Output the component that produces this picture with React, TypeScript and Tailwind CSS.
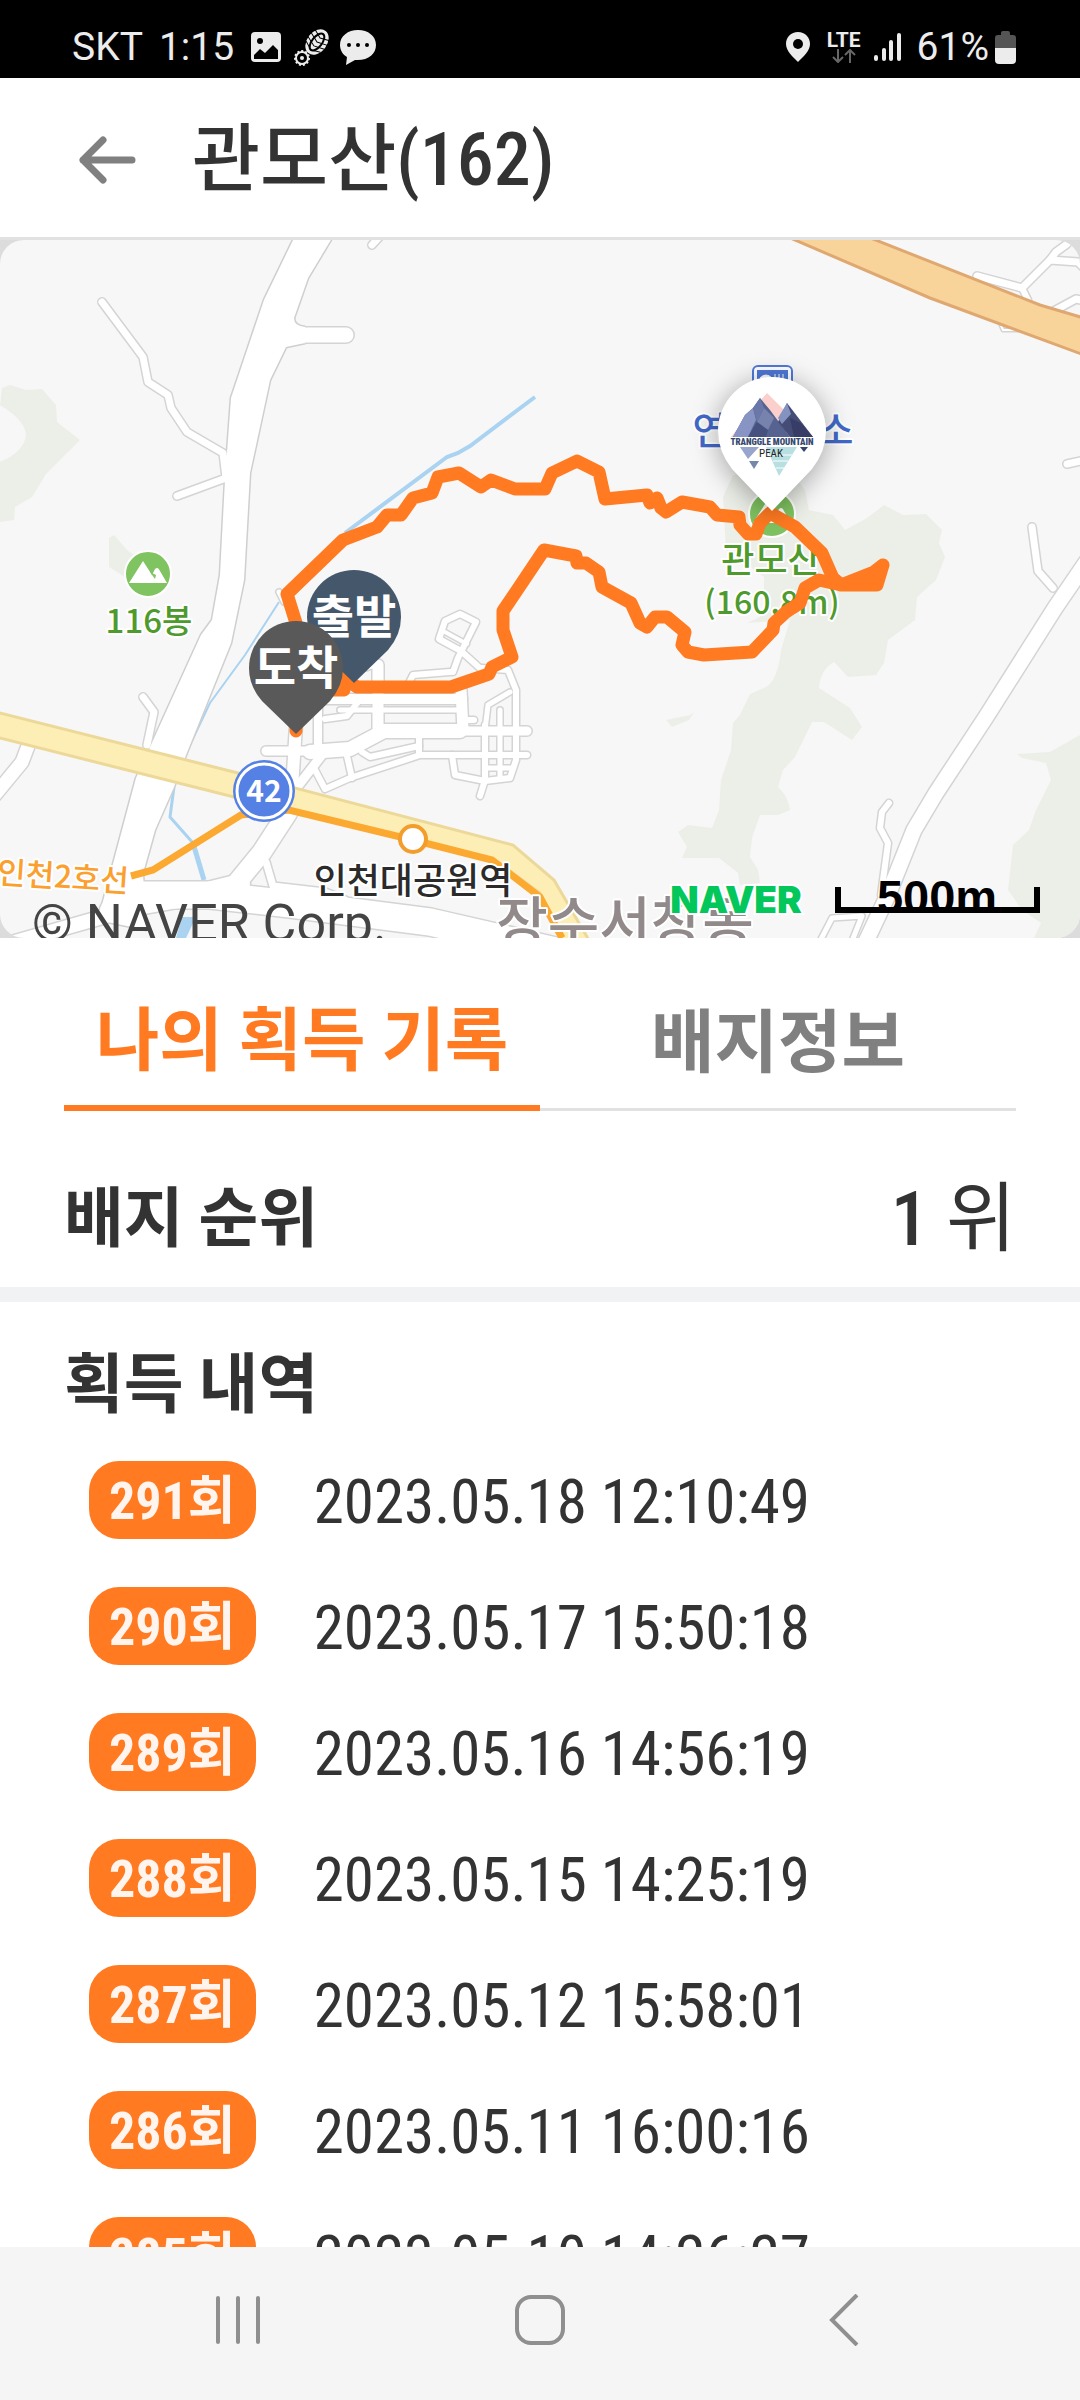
import { useState } from 'react'

interface BadgeRecord {
  count: number
  date:  string
}

const RECORDS: BadgeRecord[] = [
  { count: 291, date: '2023.05.18 12:10:49' },
  { count: 290, date: '2023.05.17 15:50:18' },
  { count: 289, date: '2023.05.16 14:56:19' },
  { count: 288, date: '2023.05.15 14:25:19' },
  { count: 287, date: '2023.05.12 15:58:01' },
  { count: 286, date: '2023.05.11 16:00:16' },
  { count: 285, date: '2023.05.10 14:26:27' },
]

const FOREST = [
  'M2 148L10 145L26 150L42 149L56 165L57 182L80 200L68 212L46 234L32 257L15 267L14 280L0 282V222Q24 212 26 195Q25 180 0 165Z',
  'M109 298L114 295L127 310L138 318L160 345L125 337L109 327Z',
  'M733 235L723 257L726 310L764 337L764 375L747 383L790 380L781 410Q778 440 766 447L750 454L740 475L733 483L731 510L721 540L719 570L712 588L688 585L678 592L687 607L682 618L719 618L738 633L740 645L760 643L758 630L750 617L752 598L760 575L778 575L790 570Q788 556 778 547L783 530L795 517L812 482L824 482L852 500L862 487L850 468L819 448Q820 430 834 422L848 437L876 435L884 423L888 400L915 380L917 357L936 340L945 317L939 303L942 290L926 274L903 275L884 265L867 278L845 290L833 275L809 270L805 250L790 230Z',
  'M1080 495L1050 512L1017 514L1022 518L1046 523L1051 540L1036 570L1029 590L1013 605L1008 650L1022 670L1041 683L1034 698H1080Z',
  'M666 480L690 475L694 472L689 480L672 487Z',
]

const STREAMS = [
  { d: 'M535 157L470 206L458 213L447 217L345 293', w: 4 },
  { d: 'M279 362L245 415L210 463L190 505L186 515', w: 2 },
  { d: 'M174 547L170 577L193 603', w: 3 },
  { d: 'M193 603L204 640', w: 5 },
]

const ROADS = [
  { d: 'M102 62L143 117L148 142L168 155L171 168L187 192L223 213L226 238L177 256', w: 7 },
  { d: 'M372 5L382 -6', w: 7 },
  { d: 'M290 95H346', w: 15 },
  { d: 'M143 457L154 472L147 505', w: 7 },
  { d: 'M-6 556L22 522L34 490', w: 13 },
  { d: 'M279 352L284 362', w: 5 },
  // housing blocks east of the pins
  { d: 'M296 485L292 548', w: 12 },
  { d: 'M266 511H345L380 491H527', w: 9 },
  { d: 'M318 455V510', w: 8 },
  { d: 'M325 479L347 476L362 457', w: 6 },
  { d: 'M310 459H462', w: 10 },
  { d: 'M340 470H462', w: 5 },
  { d: 'M310 512L350 509L384 491H460', w: 14 },
  { d: 'M378 425V488', w: 11 },
  { d: 'M378 424L366 428', w: 5 },
  { d: 'M461 450L463 490', w: 11 },
  { d: 'M463 480H474', w: 6 },
  { d: 'M298 546L325 511', w: 9 },
  { d: 'M314 528L325 549L350 538L420 515H527', w: 6 },
  { d: 'M347 516L352 538', w: 6 },
  { d: 'M362 512L370 517L419 506', w: 6 },
  { d: 'M419 495V512', w: 6 },
  { d: 'M452 515L455 535L485 541L510 538L516 520V450L508 430L482 428', w: 6 },
  { d: 'M485 485V540L480 556', w: 6 },
  { d: 'M500 470V538', w: 5 },
  { d: 'M485 528H513', w: 5 },
  { d: 'M485 490L488 465L510 452', w: 5 },
  { d: 'M482 430L461 411L439 399L445 381L460 374L476 382L458 418L453 432', w: 6 },
  { d: 'M445 392L467 404', w: 4 },
  { d: 'M408 445L413 435L450 432', w: 6 },
  // around the station
  { d: 'M288 572L262 612L235 645', w: 19 },
  { d: 'M266 622L273 646L325 652L345 660', w: 7 },
  { d: 'M120 655L210 655L290 664L430 682L560 712', w: 27 },
  { d: 'M110 670L200 654L240 644', w: 20 },
  { d: 'M-6 708L120 672', w: 14 },
  // east side
  { d: 'M1098 305L1055 368L986 477L936 553L914 590L888 655L862 710', w: 15 },
  { d: 'M1032 287L1038 331L1053 348', w: 7 },
  { d: 'M889 563L882 572L880 588L888 603L881 655', w: 6 },
  { d: 'M818 705L832 678L862 676L850 706', w: 5 },
  { d: 'M1067 224L1090 219', w: 7 },
  { d: 'M977 36L1022 48L1050 20L1078 22L1090 34', w: 7 },
  { d: 'M1050 20L1056 12L1067 4', w: 7 },
  { d: 'M1022 48L1028 60', w: 6 },
  { d: 'M1052 72L1076 59L1090 62', w: 7 },
  { d: 'M997 76L1003 90H1032', w: 2 },
]

const MAIN_ROAD =
  'M294 -2L264 60L231 158L225 240L220 335L212 380L201 395L151 505L136 538L98 680L146 690L143 633L155 590L174 547L186 515L231 403L244 340L250 233L270 140L286 107L305 103V87Q294 86 294 78L308 38L332 -2Z'

const ROUTE =
  'M296 491V383L287 354L343 300L377 287L387 275H401L413 258L432 253L438 237L459 233L481 247L491 240L515 249H545L552 233L577 221L599 232L605 259L647 255L650 263L657 258L661 268L666 272L682 262L710 267L717 275L739 277L740 285L748 294H756L760 283L770 273L795 287L822 313L833 338L841 345L874 332L883 325L877 345H841L819 340L805 348L800 363L786 372L774 383L773 390L752 412L704 415L688 412L682 405L685 392L667 377H655L647 387L640 383L631 363L602 347L599 332L586 323H577L576 316L544 310L503 371V390L512 417L492 427L489 434L451 447H357L343 437L344 450H300'

function MapText({ x, y, size, fill, children }: { x: number; y: number; size: number; fill: string; children: string }) {
  return (
    <text
      x={x}
      y={y}
      fontSize={size}
      fill={fill}
      stroke="#fff"
      strokeWidth={4}
      strokeLinejoin="round"
      textAnchor="middle"
      className="font-medium [paint-order:stroke]"
    >
      {children}
    </text>
  )
}

function PeakIcon({ cx, cy }: { cx: number; cy: number }) {
  return (
    <g transform={`translate(${cx} ${cy})`}>
      <circle r="23" fill="#80c361" stroke="#fff" strokeWidth="2" />
      <path d="M-19 9L-5 -13L4 1L7 -5Q10 -8 12 -3L19 9Z" fill="#fff" />
      <path d="M2 -2L7 5L8 1" fill="#80c361" />
    </g>
  )
}

function MountainPin() {
  return (
    <g>
      <path
        d="M772 271L732 229Q718 211 718 191A54 54 0 0 1 826 191Q826 211 812 229Z"
        fill="#fff"
        className="drop-shadow-[0_4px_14px_rgba(0,0,0,0.35)]"
      />
      <path d="M761 160L767 153L790 176L783 187Z" fill="#fbd0cc" />
      <path d="M731 197L738 188V197Z" fill="#fbd0cc" />
      <path d="M733 197L745 175L753 168L760 158L770 170L790 197Z" fill="#566290" />
      <path d="M733 197L745 175L753 168L756 180L748 197Z" fill="#8794c4" />
      <path d="M753 168L760 158L764 168L757 182Z" fill="#6a78a9" />
      <path d="M764 168L774 178L768 190L757 182Z" fill="#7783ad" />
      <path d="M757 182L768 190L766 197H748Z" fill="#465180" />
      <path d="M778 182L787 163L813 197H790Z" fill="#454d76" />
      <path d="M778 178L787 163L791 174L782 184Z" fill="#8492bf" />
      <path d="M790 178L801 183L813 197H794Z" fill="#373d66" />
      <path d="M740 207H759L748 219Z" fill="#98a5cd" />
      <path d="M749 221H759L754 229Z" fill="#7688a8" />
      <path d="M800 207H808L804 212Z" fill="#34456f" />
      <path d="M766 207H797L779 236Z" fill="#b8dfe1" />
      <path d="M770 215H792M773 221H788M776 228H784" stroke="#fff" strokeWidth="1" />
      <text x="772" y="205" fontSize="9" textAnchor="middle" fill="#36496f" className="font-['Roboto_Condensed','Roboto',sans-serif] font-black">
        TRANGGLE MOUNTAIN
      </text>
      <text x="771" y="217" fontSize="11" textAnchor="middle" fill="#222" className="font-['Roboto_Condensed','Roboto',sans-serif]">
        PEAK
      </text>
    </g>
  )
}

function LabelPin({ cx, cy, fill, label }: { cx: number; cy: number; fill: string; label: string }) {
  return (
    <g transform={`translate(${cx} ${cy})`}>
      <path d="M0 66L-34 33Q-47 18 -47 0A47 47 0 0 1 47 0Q47 18 34 33Z" fill={fill} />
      <text y="16" fontSize="46" fill="#fff" textAnchor="middle" className="font-bold">
        {label}
      </text>
    </g>
  )
}

function CourseMap() {
  return (
    <svg
      viewBox="0 0 1080 698"
      role="img"
      aria-label="관모산"
      className="block h-auto w-full rounded-3xl bg-[#f7f7f7] font-['Noto_Sans_CJK_KR',sans-serif]"
    >
      {FOREST.map(d => <path key={d} d={d} fill="#ecefe8" />)}
      {STREAMS.map(s => <path key={s.d} d={s.d} fill="none" stroke="#a9d3f0" strokeWidth={s.w} />)}

      <g fill="none" strokeLinecap="round" strokeLinejoin="round">
        <path d={MAIN_ROAD} stroke="#cfcfcf" strokeWidth="3" />
        {ROADS.map(r => <path key={r.d} d={r.d} stroke="#d4d4d4" strokeWidth={r.w + 3} />)}
        {ROADS.map(r => <path key={r.d} d={r.d} stroke="#fff" strokeWidth={r.w} />)}
      </g>
      <path d={MAIN_ROAD} fill="#fff" />
      <path d="M182 677H196L186 698H176Z" fill="#a9d3f0" />

      <path d="M-4 472L238 533L513 605L554 640L590 702H563L540 653L499 623L238 558L-4 497Z" fill="#fceeb5" stroke="#ecd99a" strokeWidth="3" />
      <path d="M788 -3L930 58L1084 115V78L1040 65L868 -3Z" fill="#f8d49a" stroke="#e0a871" strokeWidth="3" />
      <path d="M131 636L153 630L241 575L289 570L413 600L492 620L540 657L562 698" fill="none" stroke="#fba930" strokeWidth="7" />
      <circle cx="413" cy="599" r="13" fill="#fff" stroke="#f29d2c" strokeWidth="4" />

      <circle cx="264" cy="551" r="31" fill="#5580e4" />
      <circle cx="264" cy="551" r="27" fill="none" stroke="#fff" strokeWidth="3" />
      <text x="264" y="562" fontSize="30" fill="#fff" textAnchor="middle" className="font-bold">42</text>

      <PeakIcon cx={148} cy={334} />
      <MapText x={149} y={393} size={33} fill="#4f9a2c">116봉</MapText>
      <PeakIcon cx={772} cy={274} />
      <MapText x={771} y={333} size={36} fill="#4f9a2c">관모산</MapText>
      <MapText x={772} y={374} size={32} fill="#4f9a2c">(160.8m)</MapText>

      <rect x="753" y="126" width="39" height="30" rx="5" fill="#fff" stroke="#4f7ad9" strokeWidth="2" />
      <rect x="757" y="130" width="31" height="22" fill="#4f7ad9" />
      <path d="M760 138Q766 132 772 138ZM775 134V140M779 134V140M783 134V140" fill="#fff" stroke="#fff" strokeWidth="1" />
      <MapText x={710} y={204} size={38} fill="#4169c8">연</MapText>
      <MapText x={836} y={204} size={38} fill="#4169c8">소</MapText>

      <g transform="rotate(4 64 638)">
        <MapText x={63} y={648} size={31} fill="#fba02e">인천2호선</MapText>
      </g>
      <MapText x={413} y={654} size={36} fill="#2b2b2b">인천대공원역</MapText>
      <MapText x={625} y={703} size={56} fill="#91898a">장수서창동</MapText>

      <path d={ROUTE} fill="none" stroke="#ff7a21" strokeWidth="13" strokeLinecap="round" strokeLinejoin="round" />
      <path d="M841 345L874 332L883 325L877 345Z" fill="#ff7a21" />

      <LabelPin cx={354} cy={377} fill="#45586b" label="출발" />
      <LabelPin cx={296} cy={428} fill="#595959" label="도착" />
      <MountainPin />

      <text x="32" y="701" fontSize="52" fill="#444" className="font-['Roboto',sans-serif]">© NAVER Corp.</text>
      <text
        x="736"
        y="673"
        fontSize="37"
        fill="#03c75a"
        stroke="#fff"
        strokeWidth="4"
        textAnchor="middle"
        className="font-['Inter',sans-serif] font-black [paint-order:stroke]"
      >
        NAVER
      </text>
      <text x="937" y="673" fontSize="47" textAnchor="middle" className="font-['Liberation_Sans',sans-serif] font-bold">500m</text>
      <path d="M838 647V670H1037V647" fill="none" stroke="#000" strokeWidth="6" />
    </svg>
  )
}

function StatusBar() {
  return (
    <div className="flex h-[78px] shrink-0 items-center justify-between bg-black pt-4 pr-16 pl-[72px] font-['Roboto',sans-serif] text-[39px] leading-none text-[#ececec]">
      <div className="flex items-center">
        <span>SKT</span>
        <span className="ml-4">1:15</span>
        <svg viewBox="0 0 126 40" className="ml-4 h-10 w-[126px]">
          <rect x="1" y="5" width="30" height="30" rx="4" fill="#ececec" />
          <circle cx="10" cy="14" r="3" fill="#000" />
          <path d="M4 32V28L10 22L15 26L23 18L28 23V32Z" fill="#000" />
          <g transform="rotate(38 67 15)">
            <ellipse cx="67" cy="15" rx="10" ry="14" fill="#ececec" />
            <path d="M57 6L67 10L77 6M56 11L67 15L78 11M56 16L67 20L78 16M58 21L67 25L76 21" fill="none" stroke="#000" strokeWidth="1" />
            <ellipse cx="67" cy="15" rx="5" ry="10" fill="none" stroke="#000" strokeWidth="2" />
          </g>
          <circle cx="52" cy="31" r="6" fill="none" stroke="#ececec" strokeWidth="2" />
          <circle cx="52" cy="31" r="7" fill="none" stroke="#ececec" strokeWidth="2" strokeDasharray="2 2" />
          <circle cx="52" cy="31" r="2" fill="#ececec" />
          <path d="M108 3C98 3 90 9 90 18C90 23 93 28 97 30L96 38L105 33C118 34 126 27 126 18C126 9 118 3 108 3Z" fill="#ececec" />
          <circle cx="99" cy="18" r="2" fill="#000" />
          <circle cx="108" cy="18" r="2" fill="#000" />
          <circle cx="117" cy="18" r="2" fill="#000" />
        </svg>
      </div>
      <div className="flex items-center">
        <svg viewBox="0 0 26 32" className="h-8 w-[26px]">
          <path d="M13 1C6 1 1 6 1 13C1 20 8 26 13 31C18 26 25 20 25 13C25 6 20 1 13 1Z" fill="#ececec" />
          <circle cx="13" cy="13" r="5" fill="#000" />
        </svg>
        <span className="ml-4 flex flex-col items-center">
          <span className="text-[21px] leading-[18px] font-bold">LTE</span>
          <svg viewBox="0 0 24 14" className="h-[14px] w-6" fill="none" stroke="#666" strokeWidth="2">
            <path d="M6 0V13M1 8L6 13L11 8M18 14V1M13 6L18 1L23 6" />
          </svg>
        </span>
        <svg viewBox="0 0 28 32" className="ml-3 h-8 w-7" stroke="#ececec" strokeWidth="4" strokeLinecap="round">
          <path d="M3 26V28M11 19V28M18 11V28M26 4V28" />
        </svg>
        <span className="ml-4">61%</span>
        <svg viewBox="0 0 21 33" className="ml-1.5 h-[33px] w-[21px]">
          <path d="M6 2Q6 0 8 0H13Q15 0 15 2V4H18Q21 4 21 7V17H0V7Q0 4 3 4H6Z" fill="#555" />
          <path d="M0 17H21V29Q21 33 17 33H4Q0 33 0 29Z" fill="#ececec" />
        </svg>
      </div>
    </div>
  )
}

const TABS = ['나의 획득 기록', '배지정보']

export default function App() {
  const [tab, setTab] = useState(0)

  return (
    <div className="flex h-screen flex-col overflow-hidden bg-white font-['Roboto_Condensed','Noto_Sans_CJK_KR',sans-serif] text-[#333]">
      <StatusBar />

      <header className="flex h-[162px] shrink-0 items-center border-b-3 border-[#e1e1e1] pt-1 pl-[78px]">
        <button aria-label="뒤로">
          <svg viewBox="0 0 58 48" className="h-12 w-[58px]" fill="none" stroke="#808080" strokeWidth="7" strokeLinecap="round" strokeLinejoin="round">
            <path d="M25 4L5 24L25 44M5 24H54" />
          </svg>
        </button>
        <h1 className="ml-14 text-[74px] leading-none font-medium">관모산(162)</h1>
      </header>

      <div className="shrink-0 bg-[#dcdcdc]">
        <CourseMap />
      </div>

      <div role="tablist" className="mx-16 flex h-[173px] shrink-0">
        {TABS.map((t, i) => (
          <button
            key={t}
            role="tab"
            aria-selected={tab === i}
            onClick={() => setTab(i)}
            className={`flex flex-1 items-center justify-center pt-10 text-[69px] leading-none font-bold ${
              tab === i ? 'border-b-6 border-[#ff7a21] text-[#ff7a21]' : 'border-b-3 border-[#e1e1e1] text-[#808080]'
            }`}
          >
            {t}
          </button>
        ))}
      </div>

      <section className="flex h-[191px] shrink-0 items-center justify-between border-b-15 border-[#f1f2f4] px-16 pt-10">
        <h2 className="text-[65px] leading-none font-bold">배지 순위</h2>
        <p className="text-[76px] leading-none">
          <strong className="font-medium">1</strong> 위
        </p>
      </section>

      <section className="min-h-0 flex-1 overflow-hidden">
        <h2 className="flex h-[159px] items-center px-16 pt-2 text-[65px] leading-none font-bold">획득 내역</h2>
        <ul className="flex flex-col gap-12 pl-[89px]">
          {RECORDS.map(r => (
            <li key={r.count} className="flex items-center gap-[58px]">
              <span className="flex h-[78px] items-center rounded-[30px] bg-[#ff7a21] px-5 pt-1 text-[52px] leading-none font-bold text-[#fff5ee]">
                {r.count}회
              </span>
              <time className="pt-1 text-[61px] leading-none">{r.date}</time>
            </li>
          ))}
        </ul>
      </section>

      <nav className="flex h-[153px] shrink-0 items-center justify-around bg-[#f5f5f5] px-[88px] pb-2">
        <button aria-label="최근 앱">
          <svg viewBox="0 0 48 52" className="h-[52px] w-12" stroke="#8f8f8f" strokeWidth="4" strokeLinecap="round">
            <path d="M4 4V48M24 4V48M44 4V48" />
          </svg>
        </button>
        <button aria-label="홈">
          <svg viewBox="0 0 52 52" className="size-[52px]" fill="none" stroke="#8f8f8f" strokeWidth="4">
            <rect x="3" y="3" width="46" height="46" rx="14" />
          </svg>
        </button>
        <button aria-label="이전">
          <svg viewBox="0 0 48 52" className="h-[52px] w-12" fill="none" stroke="#8f8f8f" strokeWidth="4">
            <path d="M39 1L14 26L39 51" />
          </svg>
        </button>
      </nav>
    </div>
  )
}
